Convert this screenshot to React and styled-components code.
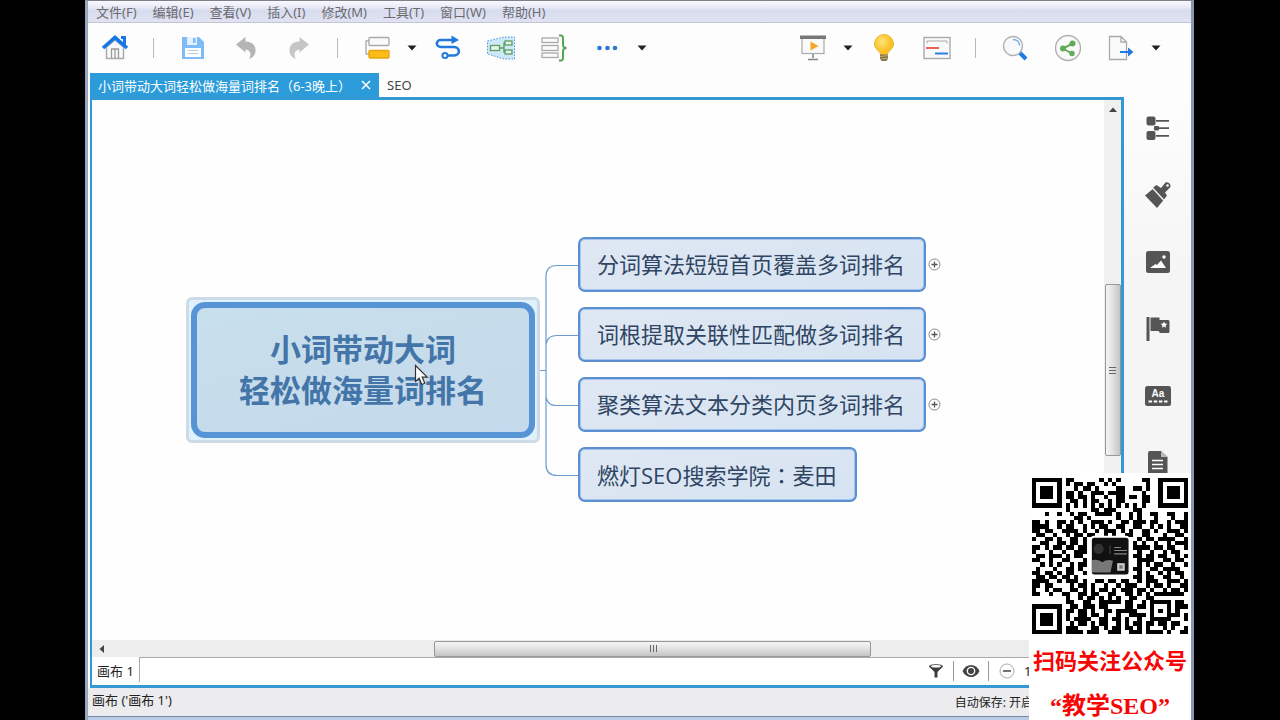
import styled, { createGlobalStyle } from 'styled-components'

const GlobalStyle = createGlobalStyle`
	* {
		box-sizing: border-box;
	}
	body {
		margin: 0;
		background-color: #000;
		font-family: 'Noto Sans', 'Noto Sans CJK SC', sans-serif;
		font-size: 13px;
		color: #222;
	}
	button {
		border: none;
		padding: 0;
		background: none;
		font: inherit;
		color: inherit;
		cursor: pointer;
	}
`
const Screen = styled.div`
	position: relative;
	height: 100vh;
	padding: 0 86px 0 85px;
	overflow: hidden;
`
const Window = styled.div`
	display: flex;
	flex-direction: column;
	height: 100%;
	border-left: 3px solid #9aa5c0;
	border-right: 3px solid #8d95ad;
	border-top: 1px solid #80808c;
	background-color: #fdfdfd;
`
const MenuBar = styled.nav`
	display: flex;
	gap: 16px;
	height: 22px;
	padding: 0 8px;
	background: linear-gradient(#f8f9fd 0%, #e8ebf6 30%, #d7dcee 45%, #dfe2f3 100%);
	border-bottom: 1px solid #c3c5d2;
`
const MenuItem = styled.button`
	line-height: 20px;
	color: #6b6b70;
`
const Toolbar = styled.div`
	display: flex;
	justify-content: space-between;
	height: 50px;
	padding-right: 26px;
	flex-shrink: 0;
`
const ToolGroup = styled.div`
	display: flex;
	align-items: center;
`
const ToolButton = styled.button`
	display: grid;
	place-items: center;
	width: ${props => (props.$narrow ? '18px' : '53px')};
	height: 40px;
`
const Separator = styled.div`
	width: 25px;
	height: 20px;
	background: linear-gradient(#b9b9b9, #b9b9b9) center / 1px 100% no-repeat;
`
const Tabs = styled.div`
	display: flex;
	height: 24px;
	padding-left: 2px;
	flex-shrink: 0;
`
const Tab = styled.div`
	display: flex;
	align-items: center;
	gap: 10px;
	padding: 0 8px;
	color: ${props => (props.$active ? '#fff' : '#444')};
	background-color: ${props => (props.$active ? '#2b9bd9' : 'transparent')};
`
const Main = styled.div`
	display: flex;
	flex: 1;
	min-height: 0;
	padding-left: 2px;
`
const Editor = styled.main`
	display: flex;
	flex-direction: column;
	flex: 1;
	min-width: 0;
	border: 3px solid #3499d3;
	border-left-width: 2px;
`
const CanvasRow = styled.div`
	display: flex;
	flex: 1;
	min-height: 0;
`
const Canvas = styled.div`
	display: flex;
	align-items: center;
	flex: 1;
	padding: 0 0 1px 94px;
	background-color: #fefefe;
`
const Root = styled.div`
	position: relative;
	padding: 2px;
	border: 3px solid #cddbe6;
	border-radius: 6px;
	background-color: #dff1fd;
`
const RootTopic = styled.div`
	padding: 21px 42px;
	border: 6px solid #5794d5;
	border-radius: 14px;
	background: linear-gradient(165deg, #c8dfec, #c4d9eb);
	color: #4475a8;
	font-size: 31px;
	font-weight: 700;
	line-height: 41px;
	text-align: center;
	white-space: nowrap;
`
const Cursor = styled.svg`
	position: absolute;
	left: 225px;
	top: 64px;
`
const Branches = styled.div`
	display: grid;
	gap: 15px;
`
const Branch = styled.div`
	display: flex;
	align-items: center;
	gap: 2px;
`
const Topic = styled.div`
	height: 55px;
	padding: 0 19px 0 17px;
	border: 2px solid #5b8fd2;
	border-radius: 7px;
	box-shadow: inset 0 0 0 1px #a5c5ef;
	background: linear-gradient(165deg, #dfe8f3, #d7e3f2);
	color: #2f4563;
	font-family: 'Open Sans', 'Noto Sans CJK SC', sans-serif;
	font-size: 22px;
	line-height: 51px;
	white-space: nowrap;
`
// the colon sits in the middle of its cell in this family
const Colon = styled.span`
	font-family: 'Noto Sans CJK TC', sans-serif;
`
const Expand = styled.button`
	display: grid;
	place-items: center;
`
const VScroll = styled.div`
	display: grid;
	grid-template-rows: 18px 167fr 172fr 167fr 18px;
	width: 17px;
	background-color: #f0f0f0;
	justify-items: center;
	align-items: center;
`
const HScroll = styled.div`
	display: grid;
	grid-template-columns: 18px 324fr 437fr 215fr 35px;
	height: 17px;
	background-color: #ededed;
	justify-items: center;
	align-items: center;
	flex-shrink: 0;
`
const Thumb = styled.div`
	display: grid;
	place-items: center;
	width: ${props => (props.$vertical ? '16px' : '100%')};
	height: ${props => (props.$vertical ? '100%' : '16px')};
	border: 1px solid #979797;
	border-radius: 2px;
	background: linear-gradient(${props => (props.$vertical ? 'to right' : 'to bottom')}, #f5f5f5, #e3e3e3 45%, #c4c4c4);
`
const SheetBar = styled.div`
	display: flex;
	justify-content: space-between;
	height: 28px;
	padding-bottom: 2px;
	flex-shrink: 0;
	background-color: #fff;
`
const SheetTab = styled.button`
	padding: 0 5px;
	border-right: 1px solid #a9a9a9;
	border-radius: 0 0 3px 0;
`
const SheetTools = styled.div`
	display: flex;
	flex: 1;
	justify-content: flex-end;
	align-items: center;
	border-top: 1px solid #a9a9a9;
`
const SheetButton = styled.button`
	display: grid;
	place-items: center;
	width: 35px;
	height: 20px;
	border-right: ${props => (props.$last ? 'none' : '1px solid #999')};
`
const Zoom = styled.span`
	width: 97px;
`
const SideBar = styled.aside`
	display: flex;
	flex-direction: column;
	align-items: center;
	gap: 27px;
	width: 67px;
	padding-top: 11px;
	overflow: hidden;
	background: linear-gradient(#fdfdfd, #f5f5f5 30%);
`
const SideButton = styled.button`
	display: grid;
	place-items: center;
	width: 40px;
	height: 40px;
	flex-shrink: 0;
`
const StatusBar = styled.footer`
	display: flex;
	justify-content: space-between;
	height: 29px;
	padding: 0 158px 0 4px;
	line-height: 25px;
	flex-shrink: 0;
	background-color: #ececee;
	border-bottom: 1px solid #7c8699;
`
const AutoSave = styled.span`
	font-size: 12px;
	line-height: 29px;
`
const FrameEdge = styled.div`
	height: 3px;
	flex-shrink: 0;
	background-color: #b8cce8;
`
const Follow = styled.section`
	position: absolute;
	right: 89px;
	bottom: 0;
	padding: 5px 3px 0;
	background-color: #fff;
	color: #f80404;
	font-family: 'Liberation Serif', 'Noto Sans CJK SC', serif;
	font-weight: 700;
	text-align: center;
`
const FollowText = styled.p`
	margin: 0;
	height: ${props => (props.$big ? '36px' : '44px')};
	line-height: 44px;
	white-space: nowrap;
	font-size: ${props => (props.$big ? '24px' : '22px')};
`
const Qr = styled.svg`
	display: block;
	margin-bottom: 6px;
`

const Caret = () => (
	<svg width="10" height="6" viewBox="0 0 10 6">
		<path d="M0.500 0.500h9L5 5.500z" fill="#222" />
	</svg>
)
const HomeIcon = () => (
	<svg width="28" height="28" viewBox="0 0 28 28">
		<path d="M5.500 13v11.500h17V13L14 6z" fill="#fafafa" stroke="#aaa" strokeWidth="1.500" />
		<path d="M10.500 24v-9h7v9M14 15v9" fill="none" stroke="#999" strokeWidth="1.300" />
		<path d="M20 3.500h3.500v7" fill="none" stroke="#1677e8" strokeWidth="3" />
		<path d="M2 14L14 3.500 26 14" fill="none" stroke="#1677e8" strokeWidth="3.600" />
	</svg>
)
const SaveIcon = () => (
	<svg width="24" height="24" viewBox="0 0 24 24">
		<path d="M1 1h17l5 5v17H1z" fill="#7dbcf8" />
		<path d="M6 1h10v8H6z" fill="#e4f1fd" />
		<path d="M12 2h2.500v5H12z" fill="#7dbcf8" />
		<path d="M4 12h16v9H4z" fill="#fff" />
		<path d="M6.500 14.500h11M6.500 17.500h11" stroke="#b4cfe6" />
	</svg>
)
const UndoIcon = ({ flip }) => (
	<svg width="24" height="24" viewBox="0 0 24 24">
		<path
			d="M2 8.500L11.500 1v4.500c8 0 11.500 6 9.500 12-1 2.800-3 4.500-6 5.500 2.500-4 2-9-3.500-9.500v3z"
			fill={flip ? '#c6c6c6' : '#b5b5b5'}
			transform={flip ? 'matrix(-1 0 0 1 24 0)' : undefined}
		/>
	</svg>
)
const TopicIcon = () => (
	<svg width="26" height="24" viewBox="0 0 26 24">
		<path d="M5 5H2v13h3" fill="none" stroke="#aaa" strokeWidth="1.300" />
		<rect x="5" y="1.500" width="20" height="8" rx="1" fill="#fafafa" stroke="#aaa" strokeWidth="1.300" />
		<rect x="5" y="14.500" width="20" height="7.500" rx="1" fill="#fbbd16" stroke="#e5a50d" strokeWidth="1.300" />
	</svg>
)
const RelationIcon = () => (
	<svg width="26" height="26" viewBox="0 0 26 26">
		<path d="M17 5H6c-5.500 0-5.500 7 0 7h13c6.500 0 6.500 8.500 0 8.500h-6" fill="none" stroke="#2179dd" strokeWidth="2.600" />
		<path d="M16.500 0.500L24 5l-7.500 4z" fill="#2179dd" />
		<circle cx="10" cy="20.500" r="2.600" fill="#fff" stroke="#2179dd" strokeWidth="2" />
	</svg>
)
const BoundaryIcon = () => (
	<svg width="30" height="26" viewBox="0 0 30 26">
		<path d="M1.500 6L18 2h10.500v22H18L1.500 19z" fill="#cde8f8" stroke="#4a96d8" strokeDasharray="1.500 1.500" />
		<path d="M14 13h4M22 8h-4v9h4" fill="none" stroke="#5d9f5a" strokeWidth="1.400" />
		<g fill="#e5f4f0" stroke="#5d9f5a" strokeWidth="1.300">
			<rect x="4.500" y="10.500" width="9" height="5" />
			<rect x="19" y="6" width="7" height="4" />
			<rect x="19" y="15" width="7" height="4" />
		</g>
	</svg>
)
const SummaryIcon = () => (
	<svg width="28" height="28" viewBox="0 0 28 28">
		<g fill="#fafafa" stroke="#aaa" strokeWidth="1.300">
			<rect x="2" y="4" width="16" height="4.500" />
			<rect x="2" y="11.500" width="16" height="5" />
			<rect x="2" y="19" width="16" height="4.500" />
		</g>
		<path d="M19 1.500h2c2 0 2 1 2 3v6c0 2 1 3.500 3.500 3.500-2.500 0-3.500 1.500-3.500 3.500v6c0 2 0 3-2 3h-2" fill="none" stroke="#55a454" strokeWidth="2" />
	</svg>
)
const DotsIcon = () => (
	<svg width="22" height="6" viewBox="0 0 22 6" fill="#2878d6">
		<circle cx="3.500" cy="3" r="2.300" />
		<circle cx="11.500" cy="3" r="2.300" />
		<circle cx="19" cy="3" r="2.300" />
	</svg>
)
const PresentIcon = () => (
	<svg width="28" height="26" viewBox="0 0 28 26">
		<path d="M14 18v5M9 24.500h10" stroke="#858585" strokeWidth="1.600" />
		<rect x="3" y="3" width="22" height="15.500" fill="#fafafa" stroke="#aaa" strokeWidth="1.200" />
		<rect x="1" y="0.500" width="26" height="3.500" fill="#777" />
		<path d="M11.500 6.500l8 4.500-8 4.500z" fill="#f6a623" />
	</svg>
)
const BulbIcon = () => (
	<svg width="22" height="28" viewBox="0 0 22 28">
		<defs>
			<radialGradient id="glow" cx="0.4" cy="0.35">
				<stop offset="0" stopColor="#ffe47c" />
				<stop offset="1" stopColor="#fbc01e" />
			</radialGradient>
		</defs>
		<path d="M7.500 21C7.500 16.500 1.500 15.500 1.500 10a9.500 9.500 0 0 1 19 0c0 5.500-6 6.500-6 11z" fill="url(#glow)" stroke="#eeb42c" />
		<path d="M7 20.500h8v4l-1.500 2.500h-5L7 24.500z" fill="#7d745c" />
		<path d="M7 22.500l8-0.800M7.500 25l7-0.700" stroke="#c9ad58" />
	</svg>
)
const GanttIcon = () => (
	<svg width="28" height="24" viewBox="0 0 28 24">
		<rect x="1" y="1.500" width="26" height="21" fill="#fafafa" stroke="#aaa" strokeWidth="1.400" />
		<path d="M4 7.500V5h20v2.500" fill="none" stroke="#aaa" />
		<path d="M3 12h13" stroke="#ee6256" strokeWidth="2" />
		<path d="M12 17.500h13" stroke="#2b7fe0" strokeWidth="2" />
	</svg>
)
const SearchIcon = () => (
	<svg width="26" height="26" viewBox="0 0 26 26">
		<path d="M17.500 17.500l6.500 6.500" stroke="#1f7ae2" strokeWidth="4" />
		<circle cx="11" cy="11" r="9.500" fill="#f7f9fb" stroke="#b4b4b4" strokeWidth="1.500" />
		<path d="M11 4.500c4 0 6.500 2.500 6.500 6" fill="none" stroke="#6dade9" strokeWidth="1.400" />
	</svg>
)
const ShareIcon = () => (
	<svg width="28" height="28" viewBox="0 0 28 28">
		<circle cx="14" cy="14" r="12.500" fill="#fafafa" stroke="#b0b0b0" strokeWidth="1.400" />
		<path d="M18.500 9.500L9 14.500l9 5" fill="none" stroke="#62ab5b" strokeWidth="2" />
		<g fill="#62ab5b">
			<circle cx="18.500" cy="9.500" r="3" />
			<circle cx="9" cy="14.500" r="3" />
			<circle cx="18" cy="19.500" r="2.700" />
		</g>
	</svg>
)
const ExportIcon = () => (
	<svg width="26" height="26" viewBox="0 0 26 26">
		<path d="M1.500 1.500H13l5.500 5.500v17.500h-17zM13 1.500V7h5.500" fill="#fafafa" stroke="#aaa" strokeWidth="1.300" />
		<path d="M12 17h9" stroke="#1f7ae2" strokeWidth="2" />
		<path d="M20 12.500l5.500 4.500-5.500 4.500z" fill="#1f7ae2" />
	</svg>
)
const OutlineIcon = () => (
	<svg width="24" height="26" viewBox="0 0 24 26" fill="#555">
		<rect x="0.500" y="1.500" width="9" height="9" rx="2" />
		<rect x="0.500" y="16" width="9" height="9" rx="2" />
		<rect x="8" y="11" width="5" height="4.500" rx="1" />
		<path d="M10 5h13v1.800H10zM13 12.300h10v1.800H13zM10 20h13v1.800H10z" />
	</svg>
)
const BrushIcon = () => (
	<svg width="28" height="28" viewBox="0 0 28 28">
		<path d="M1 14.500L10 7l10 11.500-7 8.500z" fill="#555" />
		<path d="M9 6.500l3.500-2.500 4.500 3L21.500 1.500c2.500-1.500 6.500 2 4.500 5L21 11.500l2 3-3 4z" fill="#555" />
		<path d="M8.500 7L20 19.500" stroke="#f8f8f8" strokeWidth="1.200" />
		<circle cx="23.500" cy="4.500" r="1.300" fill="#f8f8f8" />
	</svg>
)
const PictureIcon = () => (
	<svg width="24" height="22" viewBox="0 0 24 22">
		<rect width="24" height="22" rx="2.500" fill="#555" />
		<path d="M4 17l5.500-4 1.500 1 4-4.500L20 17z" fill="#fff" />
		<circle cx="18" cy="6" r="1.700" fill="#fff" />
	</svg>
)
const FlagIcon = () => (
	<svg width="24" height="26" viewBox="0 0 24 26">
		<path d="M0.500 1h3v24h-3zM4.500 1.500h9V4h8.500q1.500 0 1.500 1.500v10q0 1.500-1.500 1.500h-8l-1.500-2h-8z" fill="#555" />
		<path d="M18 5.500l1 2 2.300.3-1.700 1.600.4 2.300-2-1.100-2 1.100.4-2.300-1.700-1.600 2.300-.3z" fill="#fff" />
	</svg>
)
const LabelIcon = () => (
	<svg width="26" height="20" viewBox="0 0 26 20">
		<rect width="26" height="20" rx="2.500" fill="#555" />
		<text x="13" y="10.500" textAnchor="middle" fontFamily="Liberation Sans, sans-serif" fontSize="10" fontWeight="700" fill="#fff">
			Aa
		</text>
		<path d="M3.500 15.500h19" stroke="#fff" strokeWidth="2" strokeDasharray="3.500 1.700" />
	</svg>
)
const NotesIcon = () => (
	<svg width="20" height="24" viewBox="0 0 20 24">
		<path d="M2 0h11l6.500 6v16q0 2-2 2H2q-2 0-2-2V2q0-2 2-2z" fill="#555" />
		<path d="M13 0v6h6.500z" fill="#bbb" />
		<path d="M4 9.500h11M4 13.500h11M4 17.500h11" stroke="#fff" strokeWidth="1.400" />
	</svg>
)
const PlusIcon = () => (
	<svg width="13" height="13" viewBox="0 0 13 13">
		<circle cx="6.500" cy="6.500" r="5.500" fill="#fff" stroke="#888" />
		<path d="M3.500 6.500h6M6.500 3.500v6" stroke="#555" strokeWidth="1.300" />
	</svg>
)
const FilterIcon = () => (
	<svg width="16" height="16" viewBox="0 0 16 16">
		<path d="M1 3.500c0-3 14-3 14 0L9.500 9v5.500h-3V9z" fill="#3c3c3c" />
		<ellipse cx="8" cy="3.300" rx="5" ry="1.200" fill="#fff" />
	</svg>
)
const EyeIcon = () => (
	<svg width="18" height="14" viewBox="0 0 18 14">
		<path d="M0.500 7C4-1 14-1 17.500 7 14 15 4 15 0.500 7z" fill="#444" />
		<circle cx="9" cy="7" r="4.300" fill="#fff" />
		<circle cx="9" cy="7" r="3" fill="#444" />
	</svg>
)
const MinusIcon = () => (
	<svg width="16" height="16" viewBox="0 0 16 16">
		<circle cx="8" cy="8" r="7" fill="#fff" stroke="#aaa" />
		<path d="M4 8h8" stroke="#444" strokeWidth="1.500" />
	</svg>
)
const Grip = ({ vertical }) => (
	<svg width="8" height="8" viewBox="0 0 8 8">
		<path d={vertical ? 'M0 1.500h7M0 4.500h7M0 7.500h7' : 'M1.500 0v7M4.500 0v7M7.500 0v7'} stroke="#666" />
	</svg>
)

const qrRows = [
	'........##......#.#.#.....##',
	'........#.##.##..#.#.......#',
	'..........#.##.#....##..##.#',
	'........##.#..###.####....#.',
	'........##.##.#..#..##.##.##',
	'.........##.#.##..#.##....##',
	'........#.#.#.#.#.#.#.#.#.#.',
	'........#.....##.###....##..',
	'...#..#..#.##..####.#..#.#..##..##..#',
	'..........##.#......#..#.#...#...#..#',
	'##.#..##.#.#..###.#..##.###.##..#.###',
	'####..#.##..#.#.##..##..##..#.#.#..##',
	'##.##..####.#..#.###.#.#..##.#..###.#',
	'.##..#..#.##.##..#.#..##..##...#..##.',
	'#..##.#..##.#............#.##.####..#',
	'..##..##.##.#...........#.#..#..#.###',
	'##.#.##.##.##...........####.##.##..#',
	'#...#..#..###............#..#..#.##..',
	'.##.###.#.##............##.##.##..#.#',
	'##..#..##...#............####..##.##.',
	'..#.#.#..#.##............#.#.##..#..#',
	'.#...#..##.#............##..##.####..',
	'##.##.#.##..#............#.#..#.#.##.',
	'.##.##.##.#.............##.##..##..#.',
	'####..#.###.#..##.##.##..#.###..###.#',
	'##.##....#.##.#..#..#.###..#.##.#..##',
	'#..#.##..##.#.#.##.#.###.##.#..#.##.#',
	'##..#..##..##.##..##..##.#.#.#######.',
	'........#..#.##.#.#.#..##..##........',
	'........##..##..#####.##..#.#####.##.',
	'.........##.###.##....##.##.#...#.###',
	'........##.##.#..##.#####...#.#.#.#..',
	'........#..##.##.#..#..####.#...###.#',
	'........#.####..##.##.#..#..#####...#',
	'.........#.##.#.##..#.#.##.##.##.##..',
	'........###...##.#.##.##.#.#...#.#..#',
	'........####.###..###..###.####.#..##'
]
const finders = [
	[0, 0],
	[30, 0],
	[0, 30]
]
const QrCode = () => (
	<Qr width="156" height="156" viewBox="0 0 37 37" shapeRendering="crispEdges" role="img" aria-label="QR">
		{qrRows.map((row, y) =>
			[...row].map((cell, x) => cell === '#' && <rect key={`${x}-${y}`} x={x} y={y} width="1" height="1" />)
		)}
		{finders.map(([x, y]) => (
			<g key={`${x}-${y}`}>
				<rect x={x} y={y} width="7" height="7" />
				<rect x={x + 1} y={y + 1} width="5" height="5" fill="#fff" />
				<rect x={x + 2} y={y + 2} width="3" height="3" />
			</g>
		))}
		<g shapeRendering="auto">
			<rect x="13.700" y="13.700" width="9.600" height="9.600" rx="1" fill="#fff" />
			<rect x="14.200" y="14.200" width="8.700" height="8.700" rx="0.600" fill="#111" />
			<circle cx="15.800" cy="16.800" r="1.200" fill="#333" />
			<path d="M14.200 19.500q1.500-.4 2.500.5 1-.9 2.500-.4l-.6 2.800h-4.400z" fill="#777" />
			<path d="M19.500 16.500h1.600M19.500 17.200h3M19.500 18h3" stroke="#888" strokeWidth="0.250" />
			<path d="M18.500 16v2" stroke="#555" strokeWidth="0.200" />
			<rect x="20.200" y="20.200" width="1.800" height="1.800" fill="#ccc" />
			<rect x="20.700" y="20.700" width="0.800" height="0.800" fill="#777" />
		</g>
	</Qr>
)

const menus = ['文件(F)', '编辑(E)', '查看(V)', '插入(I)', '修改(M)', '工具(T)', '窗口(W)', '帮助(H)']

const leftTools = [
	{ name: 'home', icon: <HomeIcon /> },
	{ name: 'sep' },
	{ name: 'save', icon: <SaveIcon /> },
	{ name: 'undo', icon: <UndoIcon /> },
	{ name: 'redo', icon: <UndoIcon flip /> },
	{ name: 'sep' },
	{ name: 'topic', icon: <TopicIcon /> },
	{ name: 'topic menu', icon: <Caret />, narrow: true },
	{ name: 'relationship', icon: <RelationIcon /> },
	{ name: 'boundary', icon: <BoundaryIcon /> },
	{ name: 'summary', icon: <SummaryIcon /> },
	{ name: 'more', icon: <DotsIcon /> },
	{ name: 'more menu', icon: <Caret />, narrow: true }
]
const rightTools = [
	{ name: 'present', icon: <PresentIcon /> },
	{ name: 'present menu', icon: <Caret />, narrow: true },
	{ name: 'brainstorm', icon: <BulbIcon /> },
	{ name: 'gantt', icon: <GanttIcon /> },
	{ name: 'sep' },
	{ name: 'search', icon: <SearchIcon /> },
	{ name: 'share', icon: <ShareIcon /> },
	{ name: 'export', icon: <ExportIcon /> },
	{ name: 'export menu', icon: <Caret />, narrow: true }
]
const sideTools = [
	{ name: 'outline', icon: <OutlineIcon /> },
	{ name: 'format', icon: <BrushIcon /> },
	{ name: 'image', icon: <PictureIcon /> },
	{ name: 'marker', icon: <FlagIcon /> },
	{ name: 'label', icon: <LabelIcon /> },
	{ name: 'notes', icon: <NotesIcon /> }
]
const topics = [
	{ id: 1, title: '分词算法短短首页覆盖多词排名', folded: true },
	{ id: 2, title: '词根提取关联性匹配做多词排名', folded: true },
	{ id: 3, title: '聚类算法文本分类内页多词排名', folded: true },
	{
		id: 4,
		title: (
			<>
				燃灯SEO搜索学院<Colon>：</Colon>麦田
			</>
		),
		folded: false
	}
]

const Tools = ({ items }) => (
	<ToolGroup>
		{items.map((tool, i) =>
			tool.name === 'sep' ? (
				<Separator key={i} />
			) : (
				<ToolButton key={i} $narrow={tool.narrow} aria-label={tool.name}>
					{tool.icon}
				</ToolButton>
			)
		)}
	</ToolGroup>
)

const MindMap = () => (
	<Canvas>
		<Root>
			<RootTopic>
				小词带动大词
				<br />
				轻松做海量词排名
			</RootTopic>
			<Cursor width="16" height="22" viewBox="0 0 16 22">
				<path d="M1.500 1.500v16l3.700-3.300 2.600 6.300 3-1.300-2.600-6h5z" fill="#fff" stroke="#333" strokeWidth="1.200" />
			</Cursor>
		</Root>
		<svg width="38" height="265" viewBox="0 0 38 265" fill="none" stroke="#6b9ad0" strokeWidth="1.200">
			<path d="M-4 133.500H6M38 28.500H17q-11 0-11 11v188q0 11 11 11h21M38 98.500H17q-11 0-11 11M38 168.500H17q-11 0-11-11" />
		</svg>
		<Branches>
			{topics.map(topic => (
				<Branch key={topic.id}>
					<Topic>{topic.title}</Topic>
					{topic.folded && (
						<Expand aria-label="expand">
							<PlusIcon />
						</Expand>
					)}
				</Branch>
			))}
		</Branches>
	</Canvas>
)

export default function App() {
	return (
		<Screen>
			<GlobalStyle />
			<Window>
				<MenuBar>
					{menus.map(menu => (
						<MenuItem key={menu}>{menu}</MenuItem>
					))}
				</MenuBar>
				<Toolbar>
					<Tools items={leftTools} />
					<Tools items={rightTools} />
				</Toolbar>
				<Tabs>
					<Tab $active>
						<button>小词带动大词轻松做海量词排名（6-3晚上）</button>
						<button aria-label="close">
							<svg width="10" height="10" viewBox="0 0 10 10">
								<path d="M1 1l8 8M9 1L1 9" stroke="#fff" strokeWidth="1.600" />
							</svg>
						</button>
					</Tab>
					<Tab>
						<button>SEO</button>
					</Tab>
				</Tabs>
				<Main>
					<Editor>
						<CanvasRow>
							<MindMap />
							<VScroll>
								<svg width="8" height="5" viewBox="0 0 8 5">
									<path d="M0 5h8L4 0.500z" fill="#444" />
								</svg>
								<span />
								<Thumb $vertical>
									<Grip vertical />
								</Thumb>
							</VScroll>
						</CanvasRow>
						<HScroll>
							<svg width="5" height="8" viewBox="0 0 5 8">
								<path d="M5 0v8L0.500 4z" fill="#444" />
							</svg>
							<span />
							<Thumb>
								<Grip />
							</Thumb>
						</HScroll>
						<SheetBar>
							<SheetTab>画布 1</SheetTab>
							<SheetTools>
								<SheetButton aria-label="filter">
									<FilterIcon />
								</SheetButton>
								<SheetButton aria-label="view">
									<EyeIcon />
								</SheetButton>
								<SheetButton $last aria-label="zoom out">
									<MinusIcon />
								</SheetButton>
								<Zoom>1</Zoom>
							</SheetTools>
						</SheetBar>
					</Editor>
					<SideBar>
						{sideTools.map(tool => (
							<SideButton key={tool.name} aria-label={tool.name}>
								{tool.icon}
							</SideButton>
						))}
					</SideBar>
				</Main>
				<StatusBar>
					<span>画布 ('画布 1')</span>
					<AutoSave>自动保存: 开启</AutoSave>
				</StatusBar>
				<FrameEdge />
			</Window>
			<Follow>
				<QrCode />
				<FollowText>扫码关注公众号</FollowText>
				<FollowText $big>“教学SEO”</FollowText>
			</Follow>
		</Screen>
	)
}
